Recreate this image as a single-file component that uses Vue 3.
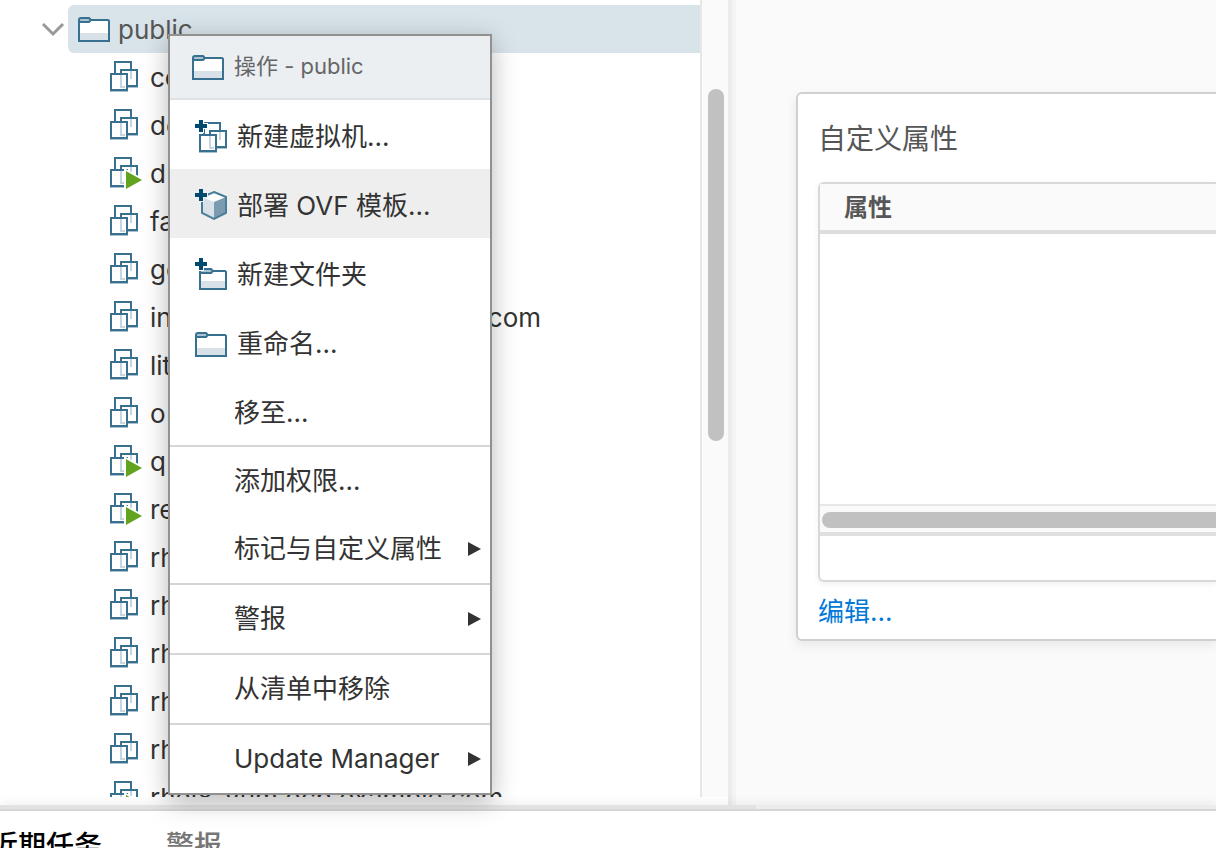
<script setup>
const machines = [
  { head: 'ce' },
  { head: 'de' },
  { head: 'd', running: true },
  { head: 'fa', tail: 'm', span: 'medium' },
  { head: 'ge' },
  { head: 'in', tail: 'com', span: 'wide' },
  { head: 'lit' },
  { head: 'o' },
  { head: 'q', running: true },
  { head: 're', running: true },
  { head: 'rh' },
  { head: 'rh' },
  { head: 'rh' },
  { head: 'rh' },
  { head: 'rh' },
  { head: 'rhel8-yum.ocp.example.com', running: true },
]

const groups = [
  [
    { label: '新建虚拟机...', icon: 'new-vm' },
    { label: '部署 OVF 模板...', icon: 'ovf', active: true },
    { label: '新建文件夹', icon: 'new-folder' },
    { label: '重命名...', icon: 'folder' },
    { label: '移至...' },
  ],
  [{ label: '添加权限...' }, { label: '标记与自定义属性', submenu: true }],
  [{ label: '警报', submenu: true }],
  [{ label: '从清单中移除' }],
  [{ label: 'Update Manager', submenu: true }],
]
</script>

<template>
  <div class="app">
    <svg class="symbols" aria-hidden="true">
      <symbol id="folder" viewBox="0 -1 32 26">
        <path d="M1 24V3Q1 1 3 1H11L13 3H30L31 4V24Z" fill="#fff" />
        <path d="M2 16H30V23H2Z" fill="#d9e1e8" />
        <path d="M1 1H11L13 3L11 5H1Z" fill="#aac3d1" />
        <path d="M1 24V3Q1 1 3 1H11L13 3H30L31 4V24Z M1 5H11L13 3" fill="none" stroke="#38718f" stroke-width="2" />
      </symbol>
      <symbol id="vm" viewBox="0 0 32 31">
        <g fill="#fff" stroke="#38718f" stroke-width="2">
          <path d="M5 1H21V17H5Z" />
          <path d="M11 9H27V25H11Z" />
          <path d="M1 13H17V29H1Z" />
        </g>
        <path d="M0 30.5H18M18 26.5H28" stroke="#a9c0ce" />
        <path d="M21 10V17H20M11 14V26H15" fill="none" stroke="#c6d5df" stroke-width="2" />
      </symbol>
      <symbol id="vm-running" viewBox="0 0 32 32">
        <use href="#vm" width="32" height="31" />
        <path d="M14 11L34 22V34H14Z" fill="#fff" />
        <path d="M16 14L32 23L16 32Z" fill="#62a420" />
      </symbol>
      <symbol id="plus" viewBox="0 0 12 12">
        <path d="M4 0H8V4H12V8H8V12H4V8H0V4H4Z" fill="#004a70" />
      </symbol>
      <symbol id="new-vm" viewBox="0 0 32 34">
        <use href="#vm" x="4" y="2" width="32" height="31" />
        <path d="M3 0H9V3H13V9H9V13H3Z" fill="#fff" />
        <use href="#plus" width="12" height="12" />
      </symbol>
      <symbol id="ovf" viewBox="0 0 32 34">
        <path d="M7 8L19 2L31 8L19 13Z" fill="#fff" />
        <path d="M7 8L19 13V30L7 24Z" fill="#d9e1e8" />
        <path d="M31 8L19 13V30L31 24Z" fill="#7b9bb0" />
        <path d="M19 3L31 8V24L19 30L7 24V8Z" fill="none" stroke="#497e9a" stroke-width="2" />
        <path d="M3 0H9V3H13V9H9V13H3Z" fill="#eee" />
        <use href="#plus" width="12" height="12" />
      </symbol>
      <symbol id="new-folder" viewBox="0 0 32 34">
        <path d="M5 31V11H16L18 13H30L31 14V31Z" fill="#fff" />
        <path d="M6 23H30V30H6Z" fill="#d9e1e8" />
        <path d="M6 11H16L18 13L16 15H6Z" fill="#aac3d1" />
        <path d="M5 31V11H16L18 13H30L31 14V31Z M5 15H16L18 13" fill="none" stroke="#38718f" stroke-width="2" />
        <path d="M3 0H9V3H13V9H9V13H3Z" fill="#fff" />
        <use href="#plus" width="12" height="12" />
      </symbol>
    </svg>

    <div class="workspace">
      <aside class="navigator">
        <div class="tree">
          <div class="row root">
            <button class="toggle" aria-label="public" aria-expanded="true">
              <svg width="24" height="16" viewBox="0 0 24 16"><path d="M2 3L12 13L22 3" fill="none" stroke="#999" stroke-width="3" /></svg>
            </button>
            <div class="selected">
              <svg class="folder-icon"><use href="#folder" /></svg>
              <span class="text">public</span>
            </div>
          </div>
          <ul class="machines">
            <li v-for="(vm, i) in machines" :key="i" class="row">
              <svg class="vm-icon" viewBox="0 0 32 32">
                <use v-if="vm.running" href="#vm-running" width="32" height="32" />
                <use v-else href="#vm" width="32" height="31" />
              </svg>
              <span class="name text" :class="vm.span"><span>{{ vm.head }}</span><span v-if="vm.tail">{{ vm.tail }}</span></span>
            </li>
          </ul>
        </div>
        <div class="track"><div class="thumb"></div></div>
        <div class="splitter"></div>
      </aside>

      <main class="content">
        <section class="card">
          <h2>自定义属性</h2>
          <div class="datagrid">
            <table>
              <thead>
                <tr><th scope="col">属性</th></tr>
              </thead>
            </table>
            <div class="empty"></div>
            <div class="h-track"><div class="h-thumb"></div></div>
            <div class="grid-foot"></div>
          </div>
          <a class="edit" href="#">编辑...</a>
        </section>
      </main>
    </div>

    <div class="divider"><div class="grip"></div></div>
    <footer class="tasks">
      <button class="tab current">近期任务</button>
      <button class="tab">警报</button>
    </footer>

    <div class="menu" role="menu">
      <div class="menu-head">
        <svg class="folder-icon"><use href="#folder" /></svg>
        <span>操作 - public</span>
      </div>
      <div v-for="(group, g) in groups" :key="g" class="group" role="group">
        <button v-for="item in group" :key="item.label" class="item" :class="{ active: item.active, plain: !item.icon }" role="menuitem">
          <svg v-if="item.icon === 'folder'" class="folder-icon"><use href="#folder" /></svg>
          <svg v-else-if="item.icon" class="item-icon"><use :href="'#' + item.icon" /></svg>
          <span>{{ item.label }}</span>
          <svg v-if="item.submenu" class="arrow" viewBox="0 0 13 14"><path d="M0 0L13 7L0 14Z" fill="#333" /></svg>
        </button>
      </div>
    </div>
  </div>
</template>

<style>
body {
  margin: 0;
}
</style>

<style scoped>
.app {
  position: relative;
  display: flex;
  flex-direction: column;
  height: 100vh;
  overflow: hidden;
  background: #fff;
  color: #333;
  font-family: Inter, "Noto Sans CJK SC", sans-serif;
  font-size: 26px;
  line-height: 36px;
}
.symbols {
  position: absolute;
  width: 0;
  height: 0;
}
button {
  margin: 0;
  padding: 0;
  border: 0;
  background: none;
  color: inherit;
  font: inherit;
  text-align: left;
}
.workspace {
  display: flex;
  flex: 1;
  min-height: 0;
}
.navigator {
  display: flex;
  flex: none;
  width: 732px;
  padding-bottom: 8px;
}
.tree {
  flex: 1;
  min-width: 0;
  overflow: hidden;
  padding-top: 5px;
}
.row {
  display: flex;
  align-items: center;
  height: 48px;
}
.text {
  padding-top: 2px;
}
.toggle {
  display: flex;
  margin-left: 41px;
  width: 27px;
}
.selected {
  flex: 1;
  display: flex;
  align-items: center;
  gap: 8px;
  height: 48px;
  padding-left: 10px;
  border-radius: 6px 0 0 6px;
  background: #d9e4ea;
  color: #565656;
}
.folder-icon {
  flex: none;
  width: 32px;
  height: 26px;
}
.machines {
  margin: 0;
  padding: 0 0 0 110px;
  list-style: none;
}
.machines .row {
  gap: 8px;
}
.vm-icon {
  flex: none;
  width: 32px;
  height: 32px;
}
.name {
  display: flex;
  justify-content: space-between;
  white-space: nowrap;
}
.medium {
  width: 343px;
}
.wide {
  width: 391px;
}
.track {
  width: 26px;
  border-left: 2px solid #e7e7e7;
  background: #fafafa;
}
.thumb {
  width: 16px;
  height: 352px;
  margin: 89px 0 0 6px;
  border-radius: 8px;
  background: #c1c1c1;
}
.splitter {
  width: 4px;
  margin-bottom: -8px;
  background: #e8ecef;
}
.content {
  flex: 1;
  min-width: 0;
  overflow: hidden;
  padding: 92px 0 0 64px;
  background: linear-gradient(90deg, #f4f4f4 4px, #fafafa 4px);
}
.card {
  padding: 25px 0 9px 20px;
  border: 2px solid #d0d0d0;
  border-right: 0;
  border-radius: 6px 0 0 6px;
  background: #fff;
  box-shadow: 0 4px 12px rgba(0, 0, 0, 0.08);
}
h2 {
  margin: 0 0 23px;
  color: #565656;
  font-size: 28px;
  font-weight: 400;
  line-height: 40px;
}
.datagrid {
  border: 2px solid #d8d8d8;
  border-right: 0;
  border-radius: 6px 0 0 6px;
  box-shadow: 0 2px 6px rgba(0, 0, 0, 0.06);
}
table {
  width: 100%;
  border-collapse: collapse;
}
th {
  height: 44px;
  padding: 2px 0 0 24px;
  border-bottom: 4px solid #ddd;
  background: #fafafa;
  color: #565656;
  font-size: 24px;
  font-weight: 700;
  line-height: 36px;
  text-align: left;
}
.empty {
  height: 270px;
}
.h-track {
  padding: 6px 0 4px 2px;
  border-top: 2px solid #e7e7e7;
  border-bottom: 4px solid #e0e0e0;
  background: #fafafa;
}
.h-thumb {
  height: 16px;
  border-radius: 8px 0 0 8px;
  background: #c1c1c1;
}
.grid-foot {
  height: 44px;
}
.edit {
  display: block;
  margin-top: 12px;
  color: #0079d8;
  text-decoration: none;
}
.divider {
  height: 4px;
  border-bottom: 2px solid #d6d6d6;
  background: #ececec;
  box-shadow: 0 -2px 10px rgba(0, 0, 0, 0.08);
}
.grip {
  width: 756px;
  height: 4px;
  background: #e2e2e2;
}
.tasks {
  display: flex;
  flex: none;
  gap: 64px;
  height: 37px;
  margin-left: -10px;
  background: #fff;
  overflow: hidden;
}
.tab {
  flex: none;
  height: 40px;
  padding-top: 15px;
  box-sizing: content-box;
  color: #767676;
  font-size: 28px;
  font-weight: 500;
  line-height: 40px;
}
.current {
  color: #000;
}
.menu {
  position: absolute;
  top: 34px;
  left: 168px;
  width: 320px;
  border: 2px solid #919191;
  background: #fff;
  box-shadow: 0 6px 24px rgba(0, 0, 0, 0.28);
}
.menu-head {
  display: flex;
  align-items: center;
  gap: 10px;
  height: 62px;
  padding-left: 22px;
  border-bottom: 2px solid #dee1e5;
  background: #ebeff2;
  color: #666;
  font-size: 22px;
}
.menu-head span {
  padding-bottom: 2px;
}
.group + .group {
  border-top: 2px solid #d5d5d5;
}
.item {
  display: flex;
  align-items: center;
  gap: 10px;
  width: 100%;
  height: 68px;
  padding: 0 9px 0 25px;
  white-space: nowrap;
}
.group:nth-child(2) .item {
  height: 69px;
  padding-top: 4px;
}
.item.plain {
  padding-left: 64px;
}
.active {
  background: #eee;
}
.item-icon {
  flex: none;
  width: 32px;
  height: 34px;
}
.arrow {
  flex: none;
  width: 13px;
  height: 14px;
  margin-left: auto;
}
</style>
